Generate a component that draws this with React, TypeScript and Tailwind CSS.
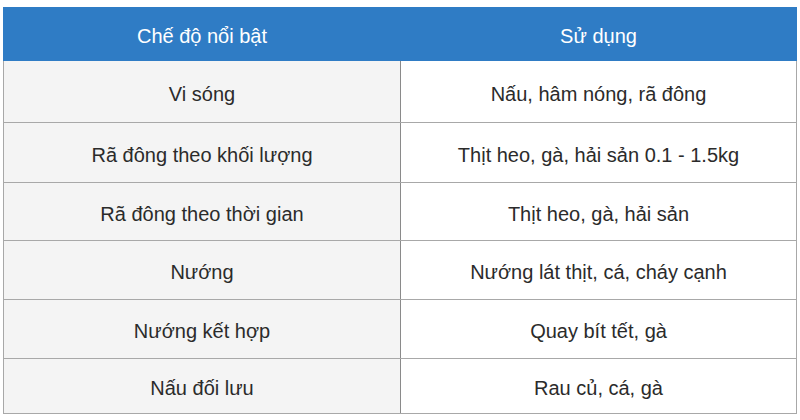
const rows = [
  { mode: "Vi sóng", use: "Nấu, hâm nóng, rã đông", h: "h-[62px]" },
  { mode: "Rã đông theo khối lượng", use: "Thịt heo, gà, hải sản 0.1 - 1.5kg", h: "h-[60px]" },
  { mode: "Rã đông theo thời gian", use: "Thịt heo, gà, hải sản", h: "h-[58px]" },
  { mode: "Nướng", use: "Nướng lát thịt, cá, cháy cạnh", h: "h-[59px]" },
  { mode: "Nướng kết hợp", use: "Quay bít tết, gà", h: "h-[59px]" },
  { mode: "Nấu đối lưu", use: "Rau củ, cá, gà", h: "h-[55px]" },
];

export default function App() {
  return (
    <div className="w-[800px] h-[420px] bg-white pt-[7px] pl-[3px] font-['Liberation_Sans',Arial,sans-serif]">
      <table className="w-[794px] border-collapse">
        <thead>
          <tr className="h-[53px] bg-[#2f7cc5] text-white text-[20px]">
            <th className="w-[397px] font-normal pt-[3px] border border-[#2f7cc5]">Chế độ nổi bật</th>
            <th className="font-normal pt-[3px] border border-[#2f7cc5] border-l-[#2a6aa8]">Sử dụng</th>
          </tr>
        </thead>
        <tbody className="text-[20px] text-[#2b2b2b]">
          {rows.map((r) => (
            <tr key={r.mode} className={r.h}>
              <td className="bg-[#f4f4f4] text-center pt-[4px] border border-[#a8a8a8] border-r-[#8a8a8a]">
                {r.mode}
              </td>
              <td className="bg-white text-center pt-[4px] border border-[#a8a8a8]">{r.use}</td>
            </tr>
          ))}
        </tbody>
      </table>
    </div>
  );
}
